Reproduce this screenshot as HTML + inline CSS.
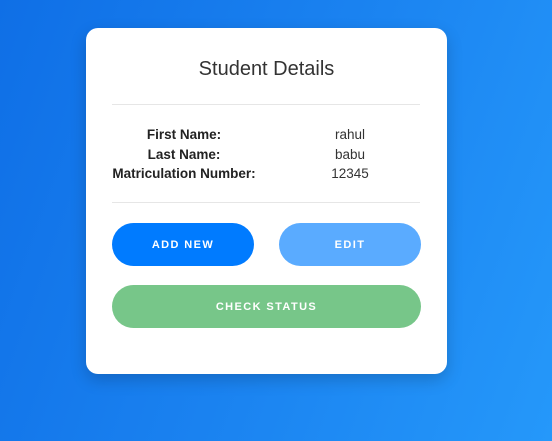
<!DOCTYPE html>
<html><head><style>
html,body{margin:0;padding:0;width:552px;height:441px;overflow:hidden}
body{background:linear-gradient(110deg,#0f6fe6 0%,#1a82f0 50%,#2598fa 100%);font-family:"Liberation Sans",sans-serif;position:relative}
.card{position:absolute;left:86px;top:28px;width:361px;height:346px;background:#fff;border-radius:12px;box-shadow:0 6px 16px rgba(0,0,0,.18)}
.title{position:absolute;top:29px;left:0;width:100%;text-align:center;font-size:20px;color:#333;line-height:24px}
.hr{position:absolute;left:26px;width:308px;height:1px;background:#e6e6e6}
.row{position:absolute;left:0;width:100%;font-size:13.5px;color:#222;height:20px;line-height:20px}
.row b{position:absolute;left:0;width:196px;text-align:center}
.row span{position:absolute;left:214px;width:100px;text-align:center;color:#333}
.btn{position:absolute;border-radius:22px;color:#fff;font-weight:bold;font-size:11px;letter-spacing:1.4px;text-align:center;line-height:44px;height:43px}
</style></head><body>
<div class="card">
<div class="title">Student Details</div>
<div class="hr" style="top:76px"></div>
<div class="row" style="top:97px"><b>First Name:</b><span>rahul</span></div>
<div class="row" style="top:117px"><b>Last Name:</b><span>babu</span></div>
<div class="row" style="top:136px"><b>Matriculation Number:</b><span>12345</span></div>
<div class="hr" style="top:174px"></div>
<div class="btn" style="left:26px;top:195px;width:142px;background:#007bff">ADD NEW</div>
<div class="btn" style="left:193px;top:195px;width:142px;background:#5aabff">EDIT</div>
<div class="btn" style="left:26px;top:257px;width:309px;background:#77c689">CHECK STATUS</div>
</div>
</body></html>
